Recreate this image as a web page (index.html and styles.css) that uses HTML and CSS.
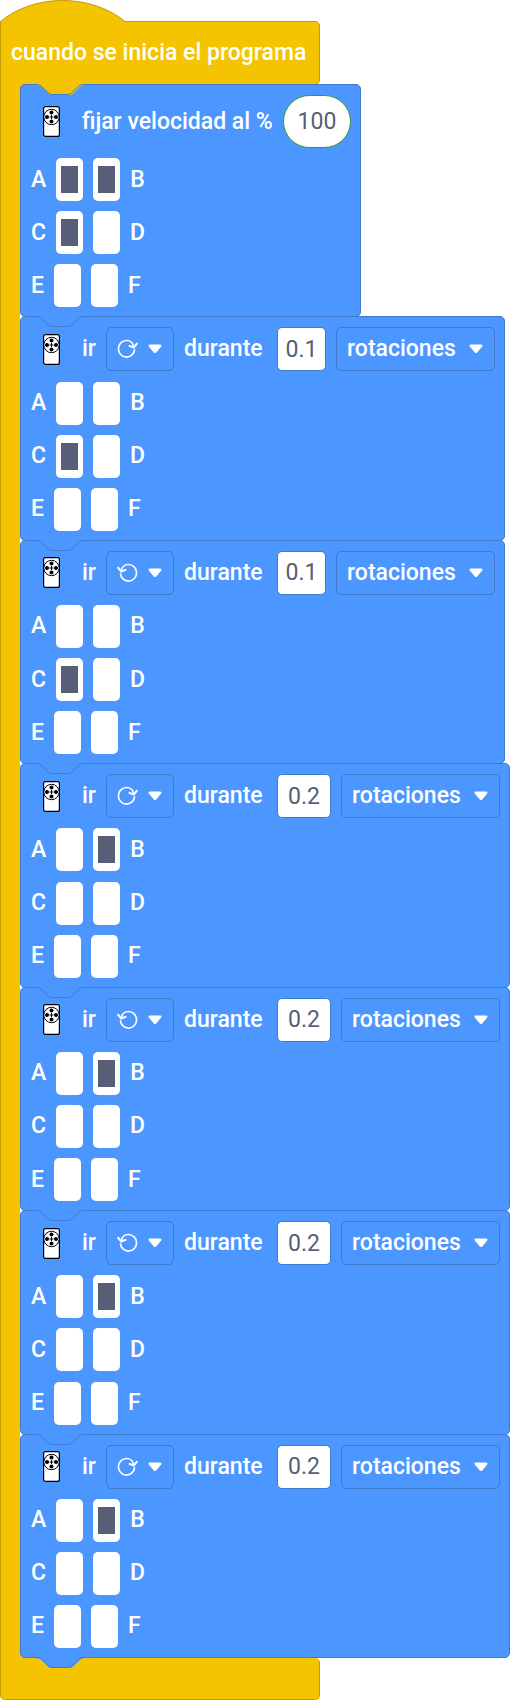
FILE: index.html
```
<!DOCTYPE html>
<html lang="es">
<head>
<meta charset="utf-8">
<meta name="viewport" content="width=device-width, initial-scale=1">
<title>Programa</title>
<link rel="stylesheet" href="styles.css">
</head>
<body>
<svg class="defs" aria-hidden="true">
  <symbol id="motor" viewBox="0 0 17 31">
    <rect x=".6" y=".6" width="15.8" height="29.8" rx="2" fill="#fff" stroke="#000" stroke-width="1.2"/>
    <circle cx="8.5" cy="11" r="7.7" fill="#fff" stroke="#000" stroke-width="1"/>
    <circle cx="8.5" cy="6.5" r="2"/><circle cx="8.5" cy="15.500" r="2"/>
    <circle cx="4" cy="11" r="2"/><circle cx="13" cy="11" r="2"/>
    <path d="M8.5 9v4M6.5 11h4" stroke="#000" stroke-width="1"/>
  </symbol>
  <symbol id="cw" viewBox="0 0 21 19">
    <path d="M17.6 10.200A8.100 8.300 0 1 1 9.500 1.500C13.500 1.500 16.300 4.200 16.700 8" fill="none" stroke="#fff" stroke-width="1.700"/>
    <path d="M11.700 6.600L16.800 8.500L20.400 4.200" fill="none" stroke="#fff" stroke-width="2"/>
  </symbol>
  <symbol id="ccw" viewBox="0 0 21 19">
    <use href="#cw" width="21" height="19" transform="matrix(-1 0 0 1 21 0)"/>
  </symbol>
  <symbol id="caret" viewBox="0 0 14 10">
    <path d="M2 .5h10c1.500 0 2 1.200 1 2.200L8.200 8.400c-.7.8-1.700.8-2.400 0L1 2.700C0 1.700.5.5 2 .5z" fill="#fff"/>
  </symbol>
  <symbol id="notch" viewBox="0 0 50 12">
    <path d="M0 0H50V1C47 1 45.500 2.200 44 3.700L39 8.700C37.500 10.200 36.500 11 34 11H18C15.500 11 14 10.200 12.500 8.700L7.500 3.700C6 2.200 4 1 0 1z"/>
    <path class="notch-line" d="M0 .5C4 .5 6 1.700 7.500 3.200L12.500 8.200C14 9.700 15.500 10.500 18 10.500H32C34.500 10.500 36 9.700 37.500 8.200L42.500 3.200C44 1.700 46 .5 50 .5"/>
  </symbol>
</svg>

<main class="program">
  <svg class="hat" viewBox="0 0 126 22" aria-hidden="true">
    <path d="M.5 22V21.500C34-6.500 91-6.500 125 21.500V22z" fill="#f5c400"/>
    <path d="M.5 22V21.500C34-6.500 91-6.500 125 21.500" fill="none" stroke="#c49d00"/>
  </svg>
  <header class="event">cuando se inicia el programa</header>

  <div class="stack">
    <section class="block">
      <svg class="notch notch-event" aria-hidden="true"><use href="#notch"/></svg>
      <div class="line">
        <svg class="motor" aria-hidden="true"><use href="#motor"/></svg>
        <label class="speed" for="speed">fijar velocidad al %</label>
        <input class="value value-round" id="speed" type="text" inputmode="decimal" value="100">
      </div>
      <div class="ports"><label>A<input type="checkbox" checked></label><label><input type="checkbox" checked>B</label></div>
      <div class="ports"><label>C<input type="checkbox" checked></label><label><input type="checkbox">D</label></div>
      <div class="ports"><label>E<input type="checkbox"></label><label><input type="checkbox">F</label></div>
    </section>

    <section class="block">
      <svg class="notch" aria-hidden="true"><use href="#notch"/></svg>
      <div class="line">
        <svg class="motor" aria-hidden="true"><use href="#motor"/></svg>
        <label for="dir1">ir</label>
        <span class="drop"><select id="dir1" class="dir"><option aria-label="horario"></option></select><svg class="turn"><use href="#cw"/></svg><svg class="caret"><use href="#caret"/></svg></span>
        <label class="during" for="amount1">durante</label>
        <input class="value" id="amount1" type="text" inputmode="decimal" value="0.1">
        <span class="drop"><select class="unit" aria-label="unidad"><option>rotaciones</option></select><svg class="caret"><use href="#caret"/></svg></span>
      </div>
      <div class="ports"><label>A<input type="checkbox"></label><label><input type="checkbox">B</label></div>
      <div class="ports"><label>C<input type="checkbox" checked></label><label><input type="checkbox">D</label></div>
      <div class="ports"><label>E<input type="checkbox"></label><label><input type="checkbox">F</label></div>
    </section>

    <section class="block">
      <svg class="notch" aria-hidden="true"><use href="#notch"/></svg>
      <div class="line">
        <svg class="motor" aria-hidden="true"><use href="#motor"/></svg>
        <label for="dir2">ir</label>
        <span class="drop"><select id="dir2" class="dir"><option aria-label="antihorario"></option></select><svg class="turn"><use href="#ccw"/></svg><svg class="caret"><use href="#caret"/></svg></span>
        <label class="during" for="amount2">durante</label>
        <input class="value" id="amount2" type="text" inputmode="decimal" value="0.1">
        <span class="drop"><select class="unit" aria-label="unidad"><option>rotaciones</option></select><svg class="caret"><use href="#caret"/></svg></span>
      </div>
      <div class="ports"><label>A<input type="checkbox"></label><label><input type="checkbox">B</label></div>
      <div class="ports"><label>C<input type="checkbox" checked></label><label><input type="checkbox">D</label></div>
      <div class="ports"><label>E<input type="checkbox"></label><label><input type="checkbox">F</label></div>
    </section>

    <section class="block">
      <svg class="notch" aria-hidden="true"><use href="#notch"/></svg>
      <div class="line">
        <svg class="motor" aria-hidden="true"><use href="#motor"/></svg>
        <label for="dir3">ir</label>
        <span class="drop"><select id="dir3" class="dir"><option aria-label="horario"></option></select><svg class="turn"><use href="#cw"/></svg><svg class="caret"><use href="#caret"/></svg></span>
        <label class="during" for="amount3">durante</label>
        <input class="value value-wide" id="amount3" type="text" inputmode="decimal" value="0.2">
        <span class="drop"><select class="unit" aria-label="unidad"><option>rotaciones</option></select><svg class="caret"><use href="#caret"/></svg></span>
      </div>
      <div class="ports"><label>A<input type="checkbox"></label><label><input type="checkbox" checked>B</label></div>
      <div class="ports"><label>C<input type="checkbox"></label><label><input type="checkbox">D</label></div>
      <div class="ports"><label>E<input type="checkbox"></label><label><input type="checkbox">F</label></div>
    </section>

    <section class="block">
      <svg class="notch" aria-hidden="true"><use href="#notch"/></svg>
      <div class="line">
        <svg class="motor" aria-hidden="true"><use href="#motor"/></svg>
        <label for="dir4">ir</label>
        <span class="drop"><select id="dir4" class="dir"><option aria-label="antihorario"></option></select><svg class="turn"><use href="#ccw"/></svg><svg class="caret"><use href="#caret"/></svg></span>
        <label class="during" for="amount4">durante</label>
        <input class="value value-wide" id="amount4" type="text" inputmode="decimal" value="0.2">
        <span class="drop"><select class="unit" aria-label="unidad"><option>rotaciones</option></select><svg class="caret"><use href="#caret"/></svg></span>
      </div>
      <div class="ports"><label>A<input type="checkbox"></label><label><input type="checkbox" checked>B</label></div>
      <div class="ports"><label>C<input type="checkbox"></label><label><input type="checkbox">D</label></div>
      <div class="ports"><label>E<input type="checkbox"></label><label><input type="checkbox">F</label></div>
    </section>

    <section class="block">
      <svg class="notch" aria-hidden="true"><use href="#notch"/></svg>
      <div class="line">
        <svg class="motor" aria-hidden="true"><use href="#motor"/></svg>
        <label for="dir5">ir</label>
        <span class="drop"><select id="dir5" class="dir"><option aria-label="antihorario"></option></select><svg class="turn"><use href="#ccw"/></svg><svg class="caret"><use href="#caret"/></svg></span>
        <label class="during" for="amount5">durante</label>
        <input class="value value-wide" id="amount5" type="text" inputmode="decimal" value="0.2">
        <span class="drop"><select class="unit" aria-label="unidad"><option>rotaciones</option></select><svg class="caret"><use href="#caret"/></svg></span>
      </div>
      <div class="ports"><label>A<input type="checkbox"></label><label><input type="checkbox" checked>B</label></div>
      <div class="ports"><label>C<input type="checkbox"></label><label><input type="checkbox">D</label></div>
      <div class="ports"><label>E<input type="checkbox"></label><label><input type="checkbox">F</label></div>
    </section>

    <section class="block">
      <svg class="notch" aria-hidden="true"><use href="#notch"/></svg>
      <div class="line">
        <svg class="motor" aria-hidden="true"><use href="#motor"/></svg>
        <label for="dir6">ir</label>
        <span class="drop"><select id="dir6" class="dir"><option aria-label="horario"></option></select><svg class="turn"><use href="#cw"/></svg><svg class="caret"><use href="#caret"/></svg></span>
        <label class="during" for="amount6">durante</label>
        <input class="value value-wide" id="amount6" type="text" inputmode="decimal" value="0.2">
        <span class="drop"><select class="unit" aria-label="unidad"><option>rotaciones</option></select><svg class="caret"><use href="#caret"/></svg></span>
      </div>
      <div class="ports"><label>A<input type="checkbox"></label><label><input type="checkbox" checked>B</label></div>
      <div class="ports"><label>C<input type="checkbox"></label><label><input type="checkbox">D</label></div>
      <div class="ports"><label>E<input type="checkbox"></label><label><input type="checkbox">F</label></div>
    </section>
  </div>

  <footer class="event-end"><svg class="notch" aria-hidden="true"><use href="#notch"/></svg></footer>
</main>
</body>
</html>
```
FILE: styles.css
```
:root {
  --blue: #4c97ff;
  --blue-line: #3d79cc;
  --yellow: #f5c400;
  --yellow-line: #c49d00;
  --ink: #575e75;
}

* { box-sizing: border-box; }

body {
  margin: 0;
  background: #fff;
  color: #fff;
  font: 500 23px/28px Roboto, sans-serif;
}

.defs { position: absolute; width: 0; height: 0; }

.program {
  display: flex;
  flex-direction: column;
  align-items: flex-start;
  min-height: 100vh;
}

.hat {
  position: relative;
  display: block;
  flex: none;
  width: 126px;
  height: 22px;
}

.event {
  margin-top: -1px;
  padding: 17px 10px;
  min-width: 320px;
  border: 1px solid var(--yellow-line);
  border-radius: 0 5px 5px 0;
  background: var(--yellow);
  white-space: nowrap;
}

.stack {
  position: relative;
  display: flex;
  flex: 1 0 auto;
  flex-direction: column;
  align-items: flex-start;
  margin-top: -1px;
  padding-left: 19px;
  border-left: 1px solid var(--yellow-line);
  background:
    linear-gradient(var(--yellow), var(--yellow)) left top / 19px 100% no-repeat,
    linear-gradient(var(--yellow), var(--yellow)) left top / 30px 9px no-repeat,
    linear-gradient(var(--yellow), var(--yellow)) left bottom / 30px 9px no-repeat;
}

.block {
  position: relative;
  display: flex;
  flex: 1 0 auto;
  flex-direction: column;
  justify-content: space-between;
  gap: 10px;
  padding: 10px 9px 9px 10px;
  border: 1px solid var(--blue-line);
  border-radius: 5px;
  background: var(--blue);
}

.block + .block { margin-top: -1px; }

.notch {
  position: absolute;
  top: -1px;
  left: 14px;
  width: 50px;
  height: 12px;
  fill: var(--blue);
}

.notch-event { fill: var(--yellow); }
.notch-line { stroke: var(--blue-line); }

.line { display: flex; align-items: center; gap: 10px; white-space: nowrap; }
.line label { min-width: 14px; }
.line .speed { min-width: 191px; }
.line .during { min-width: 83px; }

.motor { width: 41px; height: 31px; }

.value {
  width: 49px;
  height: 44px;
  padding: 0;
  border: 1px solid var(--blue-line);
  border-radius: 5px;
  background: #fff;
  color: var(--ink);
  font: inherit;
  font-weight: 400;
  text-align: center;
}

.value-wide { width: 54px; }

.value-round {
  width: 68px;
  height: 53px;
  border-color: #389438;
  border-radius: 27px;
}

.drop { position: relative; display: flex; }

.drop select {
  appearance: none;
  height: 44px;
  margin: 0;
  padding: 0 10px;
  border: 1px solid var(--blue-line);
  border-radius: 5px;
  background: var(--blue);
  color: #fff;
  font: inherit;
}

.drop .dir { width: 68px; }
.drop .unit { width: 159px; }

.turn, .caret { position: absolute; pointer-events: none; }
.turn { top: 12px; left: 11px; width: 21px; height: 19px; }
.caret { top: 17px; right: 12px; width: 14px; height: 10px; }

.ports { display: flex; gap: 10px; }
.ports label { display: flex; align-items: center; gap: 10px; }

.ports input {
  appearance: none;
  width: 27px;
  height: 43px;
  margin: 0;
  padding: 8px 5px;
  border-radius: 5px;
  background: #fff;
}

.ports input:checked { background: linear-gradient(var(--ink), var(--ink)) content-box, #fff; }

.event-end {
  position: relative;
  min-width: 320px;
  height: 42px;
  border: 1px solid var(--yellow-line);
  border-top: 0;
  border-radius: 0 5px 5px 5px;
  background: var(--yellow);
}

.event-end .notch { left: 34px; }
```
